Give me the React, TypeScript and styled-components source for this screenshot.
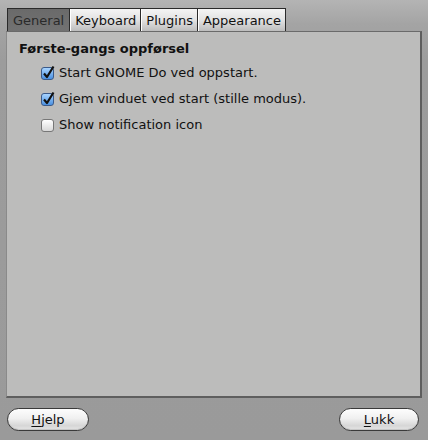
import styled, { createGlobalStyle } from "styled-components";

const Global = createGlobalStyle`
  html, body {
    margin: 0;
    padding: 0;
  }
  body {
    font-family: "DejaVu Sans", "Liberation Sans", sans-serif;
    font-size: 13px;
    color: #111;
  }
`;

const Window = styled.div`
  width: 428px;
  height: 440px;
  box-sizing: border-box;
  padding: 8px 6px 0 6px;
  background: linear-gradient(#b4b4b4 0px, #a4a4a4 24px, #9c9c9c 60px, #9a9a9a 100%);
  display: flex;
  flex-direction: column;
`;

const TabBar = styled.div`
  display: flex;
  padding-left: 1px;
  height: 23px;
`;

const Tab = styled.div<{ active?: boolean }>`
  height: 23px;
  box-sizing: border-box;
  padding: ${(p) => (p.active ? "0 5px" : "0 4px 0 5px")};
  display: flex;
  align-items: center;
  border: 1px solid #2a2a2a;
  border-left: ${(p) => (p.active ? "1px solid #2a2a2a" : "none")};
  border-bottom: none;
  color: ${(p) => (p.active ? "#2a2a2a" : "#111")};
  background: ${(p) =>
    p.active
      ? "linear-gradient(#6a6a6a, #727272)"
      : "linear-gradient(#f4f4f4 0%, #e2e2e2 50%, #bdbdbd 100%)"};
  box-shadow: ${(p) => (p.active ? "none" : "inset 1px 0 0 #fff")};
`;

const Panel = styled.div`
  height: 367px;
  box-sizing: border-box;
  background: #bcbcbb;
  border-top: 1px solid #6a6a6a;
  border-left: 1px solid #8a8a8a;
  border-right: 2px solid #5e5e5e;
  border-bottom: 2px solid #5e5e5e;
  padding: 9px 12px;
`;

const Heading = styled.div`
  font-weight: bold;
  margin-bottom: 8px;
  line-height: 16px;
`;

const Options = styled.div`
  display: flex;
  flex-direction: column;
  gap: 10px;
  padding-left: 22px;
`;

const Row = styled.label`
  display: flex;
  align-items: center;
  gap: 5px;
  line-height: 16px;
`;

const Box = styled.span<{ checked?: boolean }>`
  width: 13px;
  height: 13px;
  box-sizing: border-box;
  border-radius: 3px;
  border: 1px solid ${(p) => (p.checked ? "#3a5a8a" : "#777")};
  background: ${(p) =>
    p.checked
      ? "linear-gradient(#a8d4ff, #4a90e0)"
      : "linear-gradient(#ffffff, #d8d8d8)"};
  position: relative;
  flex-shrink: 0;
`;

const Tick = styled.svg`
  position: absolute;
  left: 0px;
  top: -3px;
`;

const Footer = styled.div`
  flex: 1;
  display: flex;
  justify-content: space-between;
  align-items: center;
  padding: 0 3px 0 1px;
`;

const Button = styled.button<{ wide?: number }>`
  width: ${(p) => p.wide}px;
  height: 23px;
  border-radius: 12px;
  border: 1px solid #3a3a3a;
  background: linear-gradient(#fdfdfd 0%, #f0f0f0 45%, #d6d6d6 80%, #e8e8e8 100%);
  font-family: "DejaVu Sans", "Liberation Sans", sans-serif;
  font-size: 13px;
  color: #111;
  padding: 0;
  box-shadow: inset 0 -1px 1px rgba(0, 0, 0, 0.15);
  u {
    text-decoration: underline;
    text-underline-offset: 2px;
  }
`;

function Check({ label, checked }: { label: string; checked?: boolean }) {
  return (
    <Row>
      <Box checked={checked}>
        {checked && (
          <Tick width="14" height="15" viewBox="0 0 14 15">
            <path
              d="M2 8.5 L5 12 L11.5 1.5"
              fill="none"
              stroke="#111"
              strokeWidth="2.2"
              strokeLinejoin="round"
            />
          </Tick>
        )}
      </Box>
      {label}
    </Row>
  );
}

export default function App() {
  return (
    <>
      <Global />
      <Window>
        <TabBar>
          <Tab active>General</Tab>
          <Tab>Keyboard</Tab>
          <Tab>Plugins</Tab>
          <Tab>Appearance</Tab>
        </TabBar>
        <Panel>
          <Heading>Første-gangs oppførsel</Heading>
          <Options>
            <Check label="Start GNOME Do ved oppstart." checked />
            <Check label="Gjem vinduet ved start (stille modus)." checked />
            <Check label="Show notification icon" />
          </Options>
        </Panel>
        <Footer>
          <Button wide={82}>
            <u>H</u>jelp
          </Button>
          <Button wide={80}>
            <u>L</u>ukk
          </Button>
        </Footer>
      </Window>
    </>
  );
}
